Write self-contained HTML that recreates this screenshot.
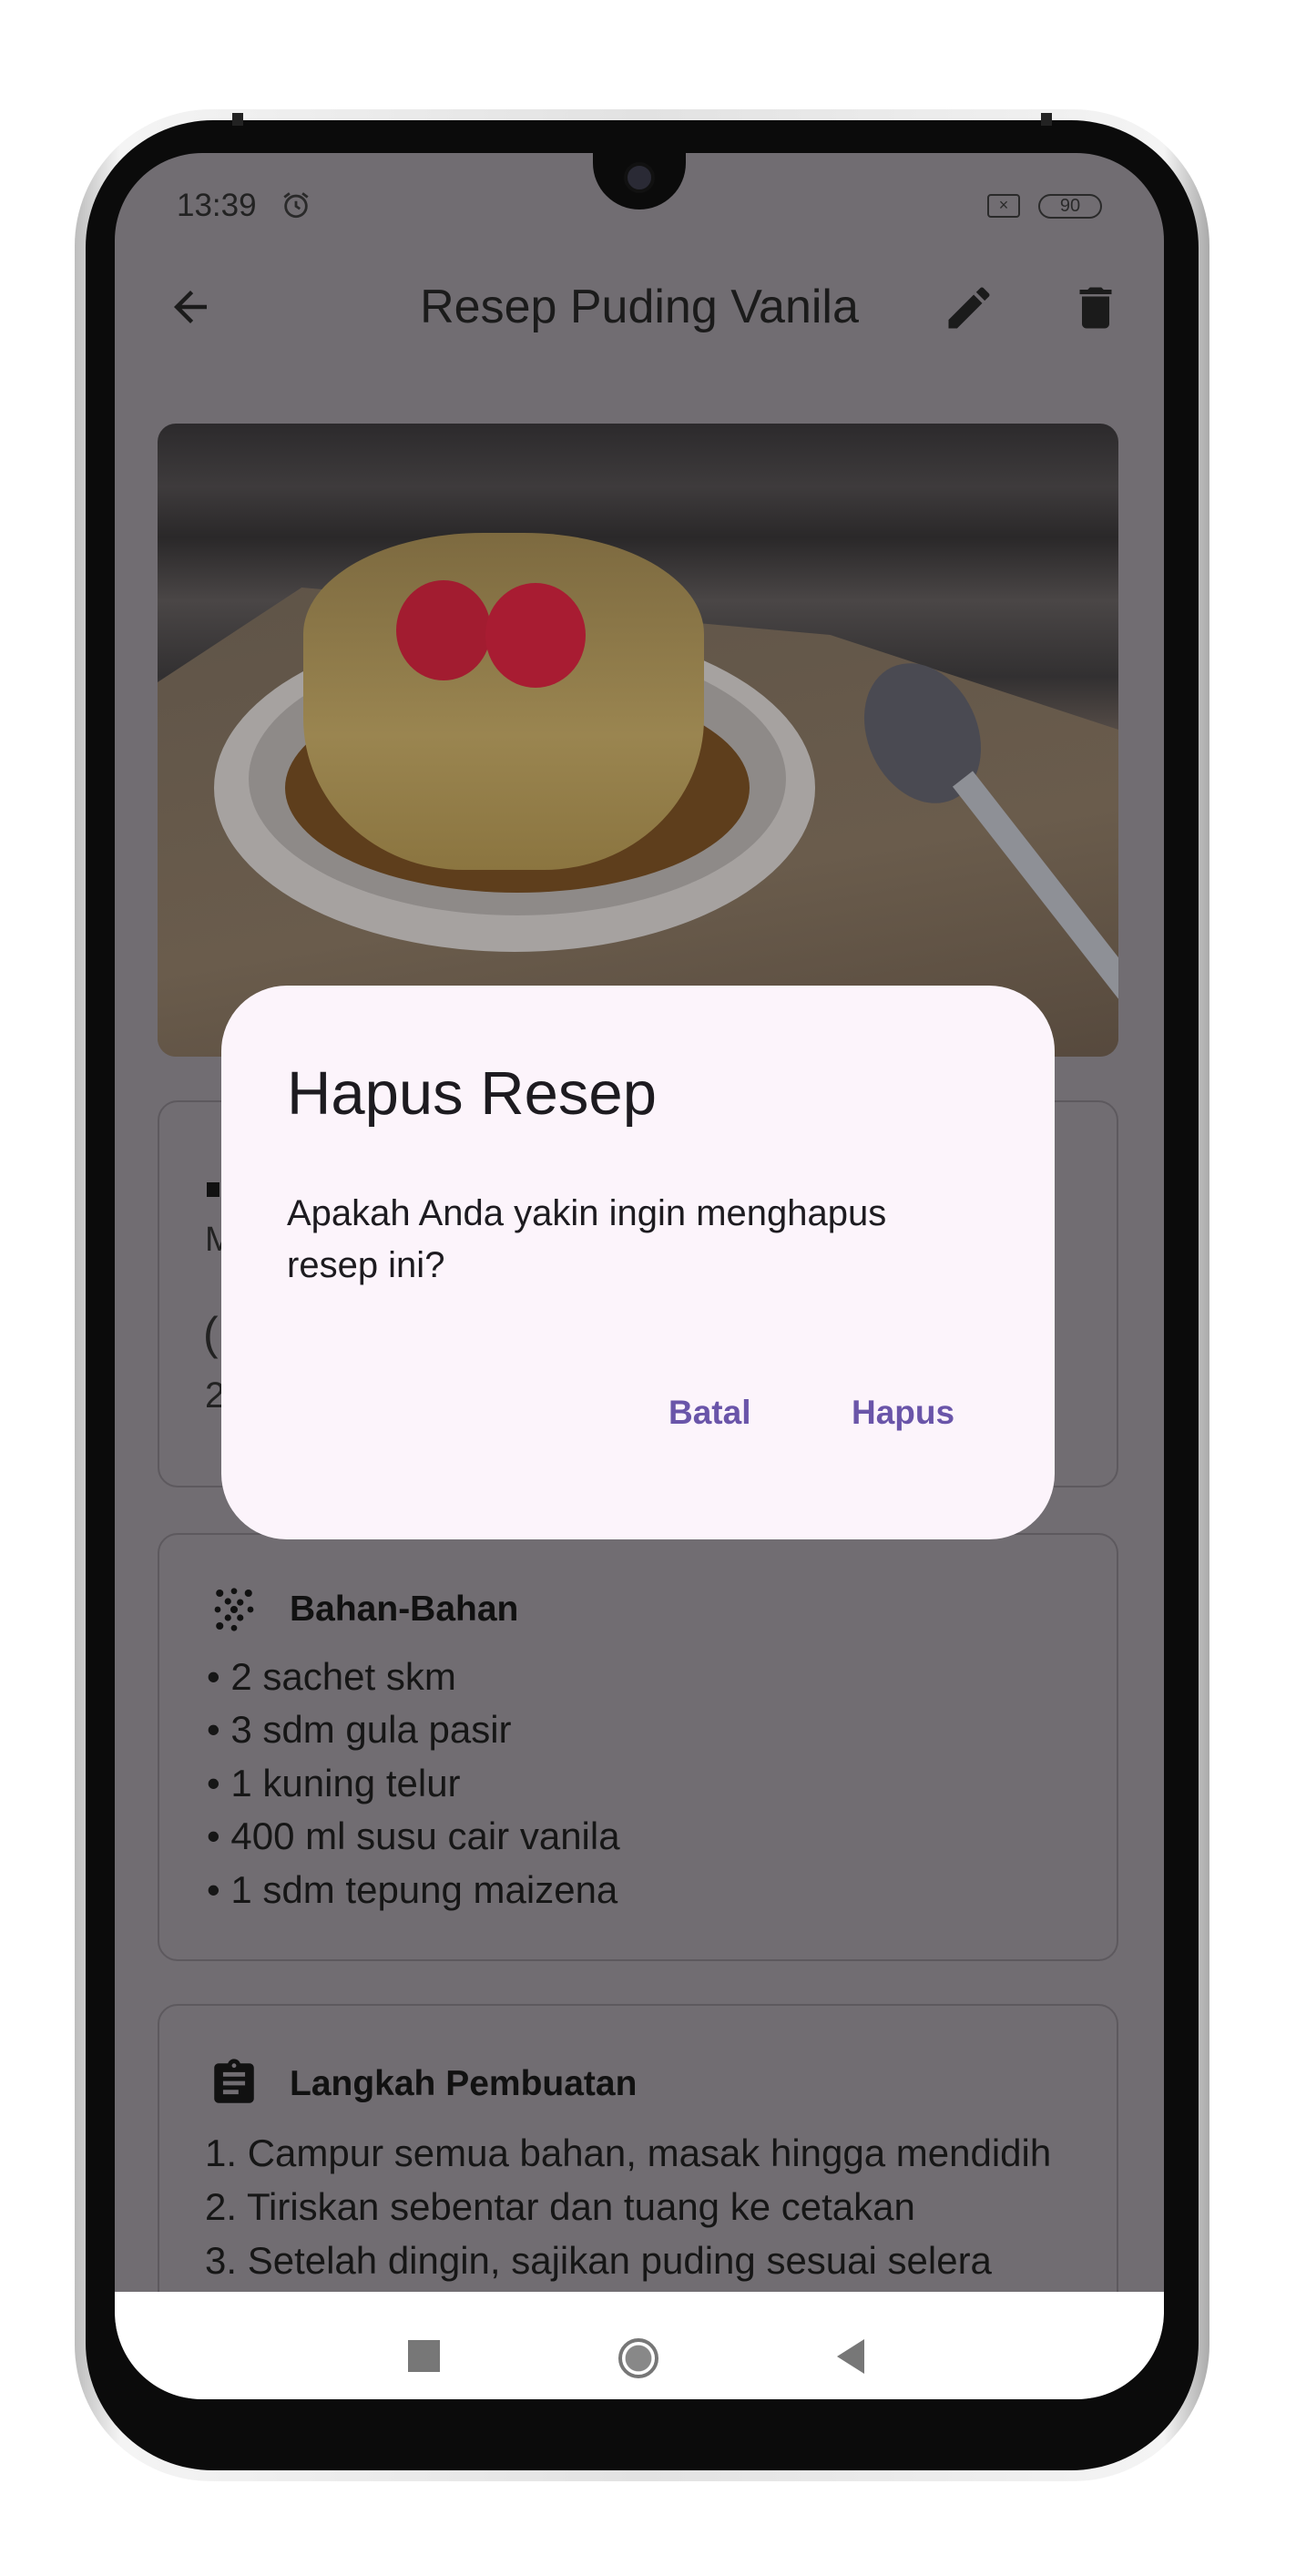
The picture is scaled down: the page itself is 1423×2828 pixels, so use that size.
<!DOCTYPE html>
<html><head><meta charset="utf-8"><style>
*{margin:0;padding:0;box-sizing:border-box}
body{width:1423px;height:2828px;background:#fff;position:relative;overflow:hidden;font-family:"Liberation Sans",sans-serif}
.abs{position:absolute}
.phone{left:82px;top:120px;width:1246px;height:2604px;border-radius:150px;background:linear-gradient(90deg,#bdbdbd,#f4f4f4 4%,#e2e2e2 50%,#f4f4f4 96%,#aaa);}
.bezel{left:94px;top:132px;width:1222px;height:2580px;border-radius:140px;background:#0b0b0b}
.screen{left:126px;top:168px;width:1152px;height:2466px;border-radius:96px;background:#716d72;overflow:hidden}
.t{position:absolute;color:#141414;white-space:nowrap}
.card{position:absolute;left:47px;width:1055px;border:2px solid #5d595e;border-radius:22px}
.li{position:absolute;left:0;font-size:42px;color:#161616;white-space:nowrap}
</style></head><body>
<div class="abs phone"></div>
<div class="abs bezel"></div>
<div class="abs" style="left:255px;top:124px;width:12px;height:14px;background:#222"></div>
<div class="abs" style="left:1143px;top:124px;width:12px;height:14px;background:#222"></div>
<div class="abs screen">
  <div class="abs" style="left:525px;top:-10px;width:102px;height:72px;background:#0b0b0b;border-radius:0 0 51px 51px"></div>
  <div class="abs" style="left:559px;top:10px;width:34px;height:34px;border-radius:50%;background:#2a2a35;border:4px solid #111"></div>
  <div class="t" style="left:68px;top:38px;font-size:35px;color:#222">13:39</div>
  <svg class="abs" style="left:182px;top:40px" width="34" height="34" viewBox="0 0 24 24"><circle cx="12" cy="13" r="8" fill="none" stroke="#2a2a2a" stroke-width="2"/><path d="M12 9v4l3 2M3 6l4-3M21 6l-4-3" stroke="#2a2a2a" stroke-width="2" fill="none"/></svg>
  <div class="abs" style="left:958px;top:45px;width:36px;height:26px;border:2.5px solid #2a2a2a;border-radius:4px;font-size:18px;text-align:center;line-height:20px;color:#2a2a2a">×</div>
  <div class="abs" style="left:1014px;top:45px;width:70px;height:27px;border:2.5px solid #2a2a2a;border-radius:14px;font-size:20px;text-align:center;line-height:22px;color:#2a2a2a">90</div>
  <svg class="abs" style="left:56px;top:142px" width="54" height="54" viewBox="0 0 24 24"><path d="M20 11H7.8l5.6-5.6L12 4l-8 8 8 8 1.4-1.4L7.8 13H20z" fill="#1b1b1b"/></svg>
  <div class="t" style="left:0;width:1152px;text-align:center;top:139px;font-size:52px;color:#1b1b1b">Resep Puding Vanila</div>
  <svg class="abs" style="left:908px;top:140px" width="60" height="60" viewBox="0 0 24 24"><path d="M3 17.25V21h3.75L17.8 9.94l-3.75-3.75zM20.7 7.04a1 1 0 000-1.41l-2.34-2.34a1 1 0 00-1.41 0l-1.83 1.83 3.75 3.75z" fill="#1b1b1b"/></svg>
  <svg class="abs" style="left:1047px;top:140px" width="60" height="60" viewBox="0 0 24 24"><path d="M6 19c0 1.1.9 2 2 2h8c1.1 0 2-.9 2-2V7H6zM19 4h-3.5l-1-1h-5l-1 1H5v2h14z" fill="#1b1b1b"/></svg>
  <div class="abs" style="left:47px;top:297px;width:1055px;height:695px;border-radius:20px;overflow:hidden;background:linear-gradient(180deg,#2c2a2c 0%,#3e3b3c 10%,#2a2829 18%,#4a4646 28%,#323031 40%,#5a504a 50%,#5e5348 100%)">
    <div class="abs" style="left:0;top:180px;width:1055px;height:520px;background:linear-gradient(170deg,#5f5448,#6a5c4c 60%,#56493d);clip-path:polygon(15% 0,70% 10%,100% 30%,100% 100%,0 100%,0 20%)"></div>
    <div class="abs" style="left:62px;top:220px;width:660px;height:360px;border-radius:50%;background:#a6a2a0"></div>
    <div class="abs" style="left:100px;top:240px;width:590px;height:300px;border-radius:50%;background:#8e8a88"></div>
    <div class="abs" style="left:140px;top:285px;width:510px;height:230px;border-radius:50%;background:#5e3e1c"></div>
    <div class="abs" style="left:160px;top:120px;width:440px;height:370px;border-radius:45% 45% 40% 40%/30% 30% 45% 45%;background:linear-gradient(180deg,#7d6a40,#9a8550 60%,#8b7540)"></div>
    <div class="abs" style="left:262px;top:172px;width:104px;height:110px;border-radius:50%;background:#a21c30"></div>
    <div class="abs" style="left:360px;top:175px;width:110px;height:115px;border-radius:50%;background:#a81c32"></div>
    <div class="abs" style="left:780px;top:260px;width:120px;height:160px;border-radius:50%;background:#4a4a52;transform:rotate(-25deg)"></div>
    <div class="abs" style="left:870px;top:390px;width:28px;height:310px;background:#8e9096;transform:rotate(-38deg);transform-origin:top"></div>
  </div>
  <div class="card" style="top:1040px;height:425px">
    <div class="abs" style="left:52px;top:88px;width:14px;height:16px;background:#111"></div>
    <div class="t" style="left:50px;top:130px;font-size:38px;color:#222">M</div>
    <div class="t" style="left:48px;top:225px;font-size:50px;color:#222">(</div>
    <div class="t" style="left:50px;top:300px;font-size:40px;color:#222">2</div>
  </div>
  <div class="card" style="top:1515px;height:470px">
    <svg class="abs" style="left:55px;top:55px" width="54" height="54" viewBox="0 0 24 24" fill="#111"><circle cx="5" cy="4" r="1.8"/><circle cx="12" cy="3" r="1.5"/><circle cx="19" cy="4" r="1.8"/><circle cx="9" cy="8" r="1.6"/><circle cx="15" cy="8.5" r="1.6"/><circle cx="4" cy="12" r="1.5"/><circle cx="12" cy="12" r="1.8"/><circle cx="20" cy="12" r="1.5"/><circle cx="9" cy="16" r="1.6"/><circle cx="15" cy="16" r="1.6"/><circle cx="5" cy="20" r="1.8"/><circle cx="12" cy="21" r="1.5"/></svg>
    <div class="t" style="left:143px;top:60px;font-size:39px;font-weight:bold;color:#111">Bahan-Bahan</div>
    <div style="position:absolute;left:52px;top:132px">
      <div class="li" style="top:0">• 2 sachet skm</div>
      <div class="li" style="top:58px">• 3 sdm gula pasir</div>
      <div class="li" style="top:117px">• 1 kuning telur</div>
      <div class="li" style="top:175px">• 400 ml susu cair vanila</div>
      <div class="li" style="top:234px">• 1 sdm tepung maizena</div>
    </div>
  </div>
  <div class="card" style="top:2032px;height:600px">
    <svg class="abs" style="left:53px;top:54px" width="58" height="62" viewBox="0 0 24 24"><path d="M19 3h-4.2C14.4 1.8 13.3 1 12 1s-2.4.8-2.8 2H5c-1.1 0-2 .9-2 2v14c0 1.1.9 2 2 2h14c1.1 0 2-.9 2-2V5c0-1.1-.9-2-2-2zm-7 0c.55 0 1 .45 1 1s-.45 1-1 1-1-.45-1-1 .45-1 1-1zm2 14H7v-2h7zm3-4H7v-2h10zm0-4H7V7h10z" fill="#111"/></svg>
    <div class="t" style="left:143px;top:64px;font-size:39px;font-weight:bold;color:#111">Langkah Pembuatan</div>
    <div style="position:absolute;left:50px;top:138px">
      <div class="li" style="top:0">1. Campur semua bahan, masak hingga mendidih</div>
      <div class="li" style="top:59px">2. Tiriskan sebentar dan tuang ke cetakan</div>
      <div class="li" style="top:118px">3. Setelah dingin, sajikan puding sesuai selera</div>
    </div>
  </div>
  <div class="abs" style="left:0;top:2348px;width:1152px;height:130px;background:#fff"></div>
  <div class="abs" style="left:322px;top:2401px;width:35px;height:35px;background:#777"></div>
  <div class="abs" style="left:553px;top:2399px;width:44px;height:44px;border-radius:50%;border:4px solid #777;background:radial-gradient(#888 55%,#fff 58%)"></div>
  <div class="abs" style="left:793px;top:2400px;width:0;height:0;border-top:19px solid transparent;border-bottom:19px solid transparent;border-right:30px solid #777"></div>
  <div class="abs" style="left:117px;top:914px;width:915px;height:608px;border-radius:72px;background:#fcf4fb">
    <div class="t" style="left:72px;top:80px;font-size:67px;color:#1d1b20">Hapus Resep</div>
    <div class="t" style="left:72px;top:222px;font-size:40px;line-height:57px;color:#1d1b20">Apakah Anda yakin ingin menghapus<br>resep ini?</div>
    <div class="t" style="left:491px;top:448px;font-size:37px;font-weight:bold;color:#6a55a9">Batal</div>
    <div class="t" style="left:692px;top:448px;font-size:37px;font-weight:bold;color:#6a55a9">Hapus</div>
  </div>
</div>
</body></html>
